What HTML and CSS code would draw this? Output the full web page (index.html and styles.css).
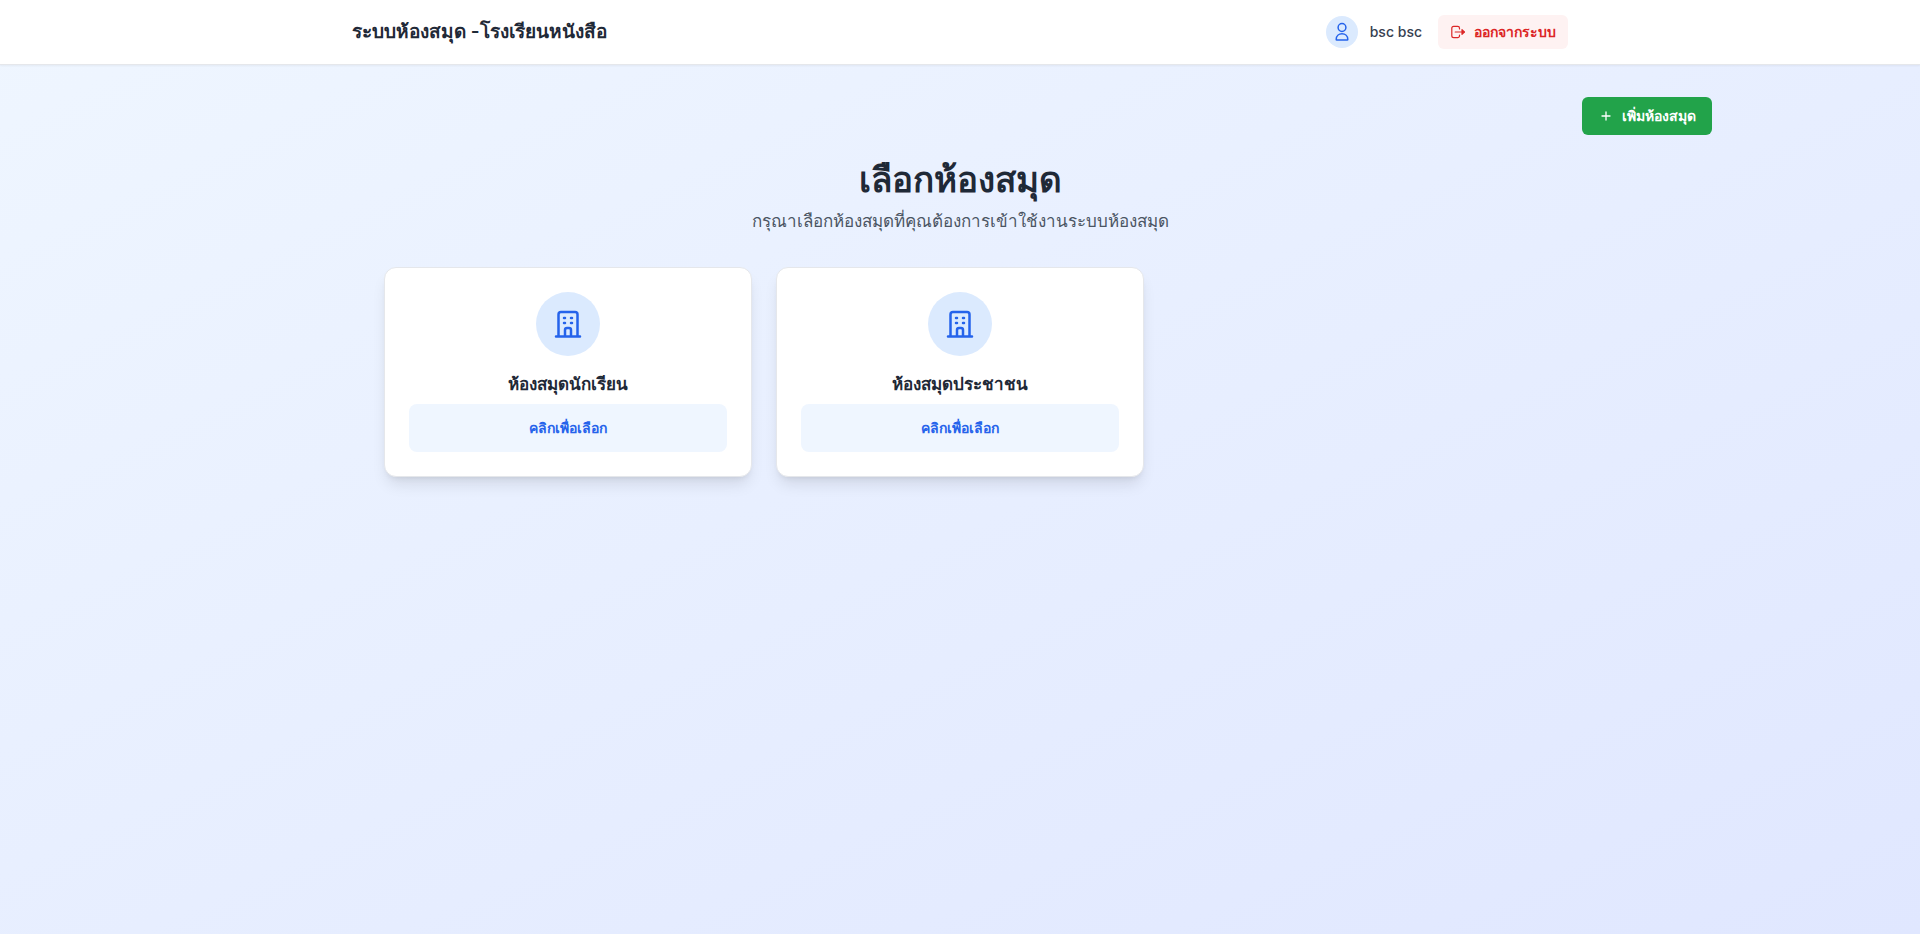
FILE: index.html
```
<!DOCTYPE html>
<html lang="th">
<head>
<meta charset="utf-8">
<meta name="viewport" content="width=device-width, initial-scale=1">
<title>ระบบห้องสมุด</title>
<link rel="stylesheet" href="styles.css">
</head>
<body>
<header class="topbar">
  <div class="topbar-inner">
    <h1 class="brand">ระบบห้องสมุด -โรงเรียนหนังสือ</h1>
    <div class="account">
      <div class="user">
        <span class="avatar">
          <svg class="icon-user" viewBox="0 0 20 20" aria-hidden="true"><circle cx="10" cy="5.5" r="3.9"/><path d="M4.2 17.4c0-3.6 2.6-5.6 5.8-5.6s5.8 2 5.8 5.6q0 .6-.6.6H4.800q-.6 0-.6-.6z"/></svg>
        </span>
        <span class="user-name">bsc bsc</span>
      </div>
      <button class="logout" type="button">
        <svg class="icon-logout" viewBox="0 0 16 16" aria-hidden="true"><path d="M9.500 5V4.200a1.800 1.800 0 0 0-1.800-1.800H3.700A1.900 1.900 0 0 0 1.800 4.300v7.400a1.900 1.900 0 0 0 1.900 1.900h4a1.800 1.800 0 0 0 1.800-1.800V11M5.200 8h9"/><path class="head" d="M12 5.700 14.400 8 12 10.300z"/></svg>
        <span>ออกจากระบบ</span>
      </button>
    </div>
  </div>
</header>
<main class="content">
  <div class="actions">
    <button class="add" type="button">
      <svg class="icon-plus" viewBox="0 0 16 16" aria-hidden="true"><path d="M8 4v8M4 8h8"/></svg>
      <span>เพิ่มห้องสมุด</span>
    </button>
  </div>
  <div class="intro">
    <h2 class="title">เลือกห้องสมุด</h2>
    <p class="subtitle">กรุณาเลือกห้องสมุดที่คุณต้องการเข้าใช้งานระบบห้องสมุด</p>
  </div>
  <div class="grid">
    <article class="card">
      <span class="badge">
        <svg class="icon-building" viewBox="0 0 32 32" aria-hidden="true"><path d="M4 28.500h24M6.500 28V6.500a2.500 2.500 0 0 1 2.500-2.500h14a2.500 2.500 0 0 1 2.500 2.500V28M13 28v-6a2 2 0 0 1 2-2h2a2 2 0 0 1 2 2v6M12 10h1M19 10h1M12 15h1M19 15h1"/></svg>
      </span>
      <h3 class="card-title">ห้องสมุดนักเรียน</h3>
      <button class="select" type="button">คลิกเพื่อเลือก</button>
    </article>
    <article class="card">
      <span class="badge">
        <svg class="icon-building" viewBox="0 0 32 32" aria-hidden="true"><path d="M4 28.500h24M6.500 28V6.500a2.500 2.500 0 0 1 2.500-2.500h14a2.500 2.500 0 0 1 2.500 2.500V28M13 28v-6a2 2 0 0 1 2-2h2a2 2 0 0 1 2 2v6M12 10h1M19 10h1M12 15h1M19 15h1"/></svg>
      </span>
      <h3 class="card-title">ห้องสมุดประชาชน</h3>
      <button class="select" type="button">คลิกเพื่อเลือก</button>
    </article>
  </div>
</main>
</body>
</html>
```
FILE: styles.css
```
* { box-sizing: border-box; margin: 0; }
body {
  min-height: 100vh;
  display: flex;
  flex-direction: column;
  font-family: Inter, sans-serif;
  color: #1f2937;
  background: linear-gradient(to bottom right, #eff6ff, #e0e7ff);
}
button { font: inherit; border: 0; cursor: pointer; }
svg { fill: none; stroke: currentColor; stroke-linecap: round; stroke-linejoin: round; }
.topbar {
  background: #fff;
  border-bottom: 1px solid #e5e7eb;
  box-shadow: 0 1px 2px rgba(0, 0, 0, 0.05);
}
.topbar-inner {
  max-width: 1280px;
  height: 64px;
  margin: 0 auto;
  padding: 0 32px;
  display: flex;
  align-items: center;
  justify-content: space-between;
}
.brand { font-size: 19px; line-height: 28px; font-weight: 600; }
.account { display: flex; align-items: center; gap: 16px; }
.user { display: flex; align-items: center; gap: 12px; }
.avatar {
  width: 32px;
  height: 32px;
  display: grid;
  place-items: center;
  border-radius: 50%;
  background: #dbeafe;
  color: #2563eb;
}
.icon-user { width: 20px; height: 20px; stroke-width: 1.5; }
.user-name { font-size: 14px; line-height: 20px; font-weight: 500; color: #374151; }
.logout {
  display: flex;
  align-items: center;
  gap: 8px;
  padding: 7px 12px;
  border-radius: 6px;
  background: #fef2f2;
  color: #dc2626;
  font-size: 14px;
  line-height: 20px;
  font-weight: 600;
}
.icon-logout { width: 16px; height: 16px; stroke-width: 1.2; }
.icon-logout .head { fill: currentColor; }
.content {
  width: 100%;
  max-width: 1536px;
  margin: 0 auto;
  padding: 32px 16px;
}
.actions { display: flex; justify-content: flex-end; margin-bottom: 24px; }
.add {
  display: flex;
  align-items: center;
  gap: 8px;
  padding: 9px 16px;
  border-radius: 6px;
  background: #22a34a;
  color: #fff;
  font-size: 14px;
  line-height: 20px;
  font-weight: 600;
}
.icon-plus { width: 16px; height: 16px; stroke-width: 1.3; }
.intro { text-align: center; margin-bottom: 32px; }
.title { font-size: 35px; line-height: 40px; font-weight: 700; margin-bottom: 8px; }
.subtitle { font-size: 17px; line-height: 28px; color: #4b5563; }
.grid {
  max-width: 1152px;
  margin: 0 auto;
  display: grid;
  grid-template-columns: repeat(3, 1fr);
  gap: 24px;
}
.card {
  display: flex;
  flex-direction: column;
  align-items: center;
  padding: 24px;
  border: 1px solid #e5e7eb;
  border-radius: 12px;
  background: #fff;
  box-shadow: 0 10px 15px -3px rgba(0, 0, 0, 0.1), 0 4px 6px -4px rgba(0, 0, 0, 0.1);
}
.badge {
  width: 64px;
  height: 64px;
  margin-bottom: 14px;
  display: grid;
  place-items: center;
  border-radius: 50%;
  background: #dbeafe;
  color: #2563eb;
}
.icon-building { width: 32px; height: 32px; stroke-width: 2.500; }
.card-title { font-size: 17px; line-height: 28px; font-weight: 600; margin-bottom: 6px; }
.select {
  width: 100%;
  padding: 14px;
  border-radius: 8px;
  background: #eff6ff;
  color: #2563eb;
  font-size: 14px;
  line-height: 20px;
  font-weight: 600;
}
```
